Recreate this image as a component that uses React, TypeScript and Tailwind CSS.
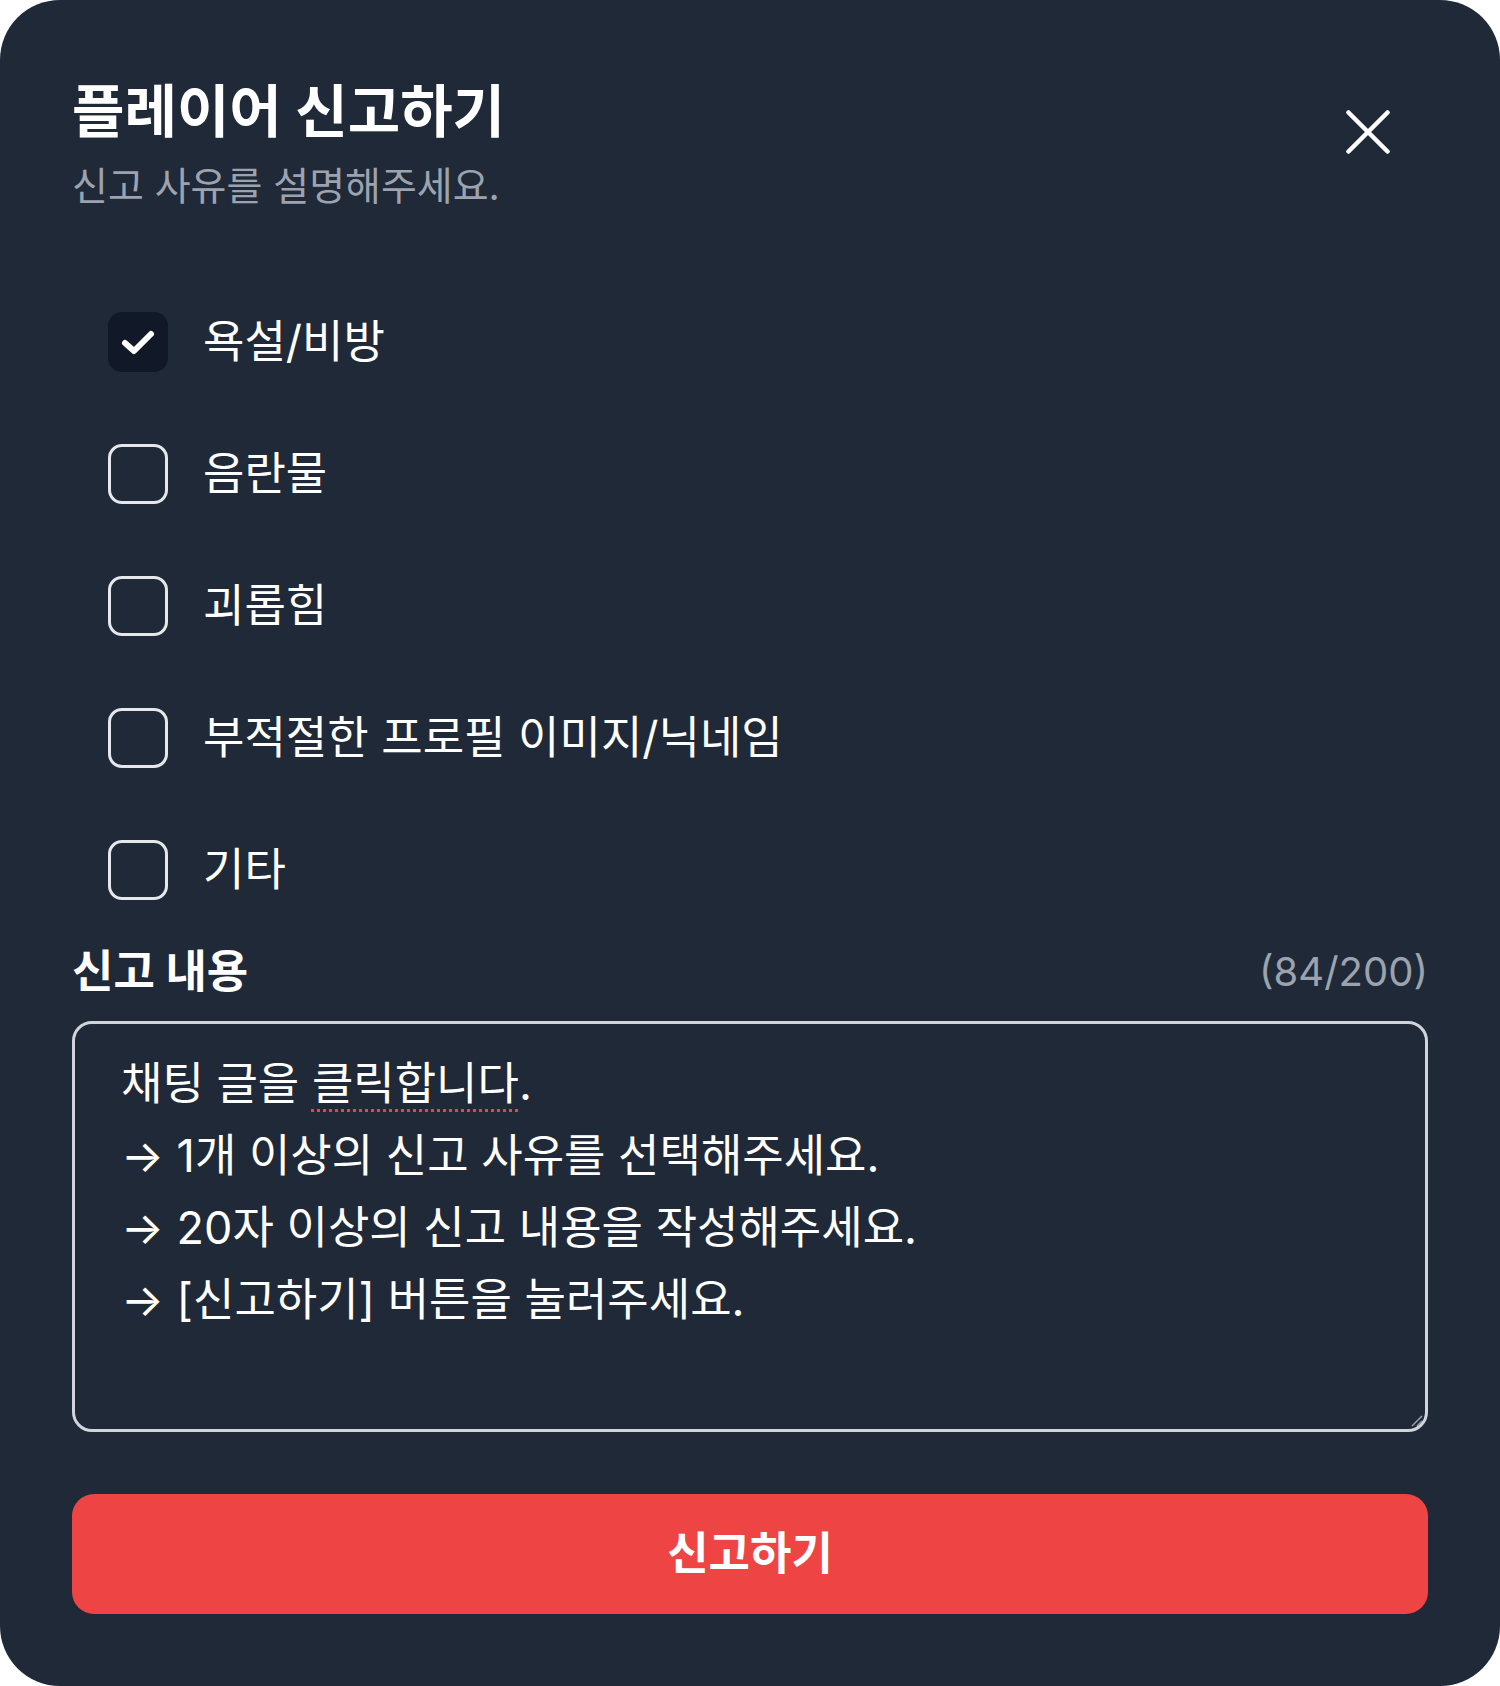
import React from "react";

const FONT = { fontFamily: '"Inter", "Noto Sans CJK KR", "Noto Sans", sans-serif' };

const reasons = [
  { label: "욕설/비방", checked: true },
  { label: "음란물", checked: false },
  { label: "괴롭힘", checked: false },
  { label: "부적절한 프로필 이미지/닉네임", checked: false },
  { label: "기타", checked: false },
];

function CheckBox({ checked }: { checked: boolean }) {
  if (checked) {
    return (
      <div className="flex h-[60px] w-[60px] shrink-0 items-center justify-center rounded-[14px] bg-[#111827]">
        <svg width="60" height="60" viewBox="0 0 60 60" fill="none">
          <polyline
            points="17,31 26,39 43,22"
            stroke="#ffffff"
            strokeWidth="6"
            strokeLinecap="round"
            strokeLinejoin="round"
          />
        </svg>
      </div>
    );
  }
  return <div className="h-[60px] w-[60px] shrink-0 rounded-[14px] border-[3px] border-[#e5e7eb]" />;
}

export default function App() {
  return (
    <div className="min-h-screen bg-white" style={FONT}>
      <div className="flex w-[1500px] flex-col rounded-[60px] bg-[#1f2937] px-[72px] pt-[72px] pb-[72px]">
        {/* Header */}
        <div className="flex items-start justify-between">
          <div className="flex flex-col">
            <h1 className="text-[57px] font-bold leading-[80px] text-white">플레이어 신고하기</h1>
            <p className="mt-[12px] text-[39px] leading-[44px] text-[#9ca3af]">신고 사유를 설명해주세요.</p>
          </div>
          <button className="mt-[20px] mr-[20px] flex h-[80px] w-[80px] items-center justify-center">
            <svg width="44" height="44" viewBox="0 0 44 44" fill="none">
              <line x1="2.5" y1="2.5" x2="41.5" y2="41.5" stroke="#ffffff" strokeWidth="4.5" strokeLinecap="round" />
              <line x1="41.5" y1="2.5" x2="2.5" y2="41.5" stroke="#ffffff" strokeWidth="4.5" strokeLinecap="round" />
            </svg>
          </button>
        </div>

        {/* Reasons */}
        <div className="mt-[104px] ml-[36px] flex flex-col gap-[72px]">
          {reasons.map((r) => (
            <div key={r.label} className="flex h-[60px] items-center gap-[35px]">
              <CheckBox checked={r.checked} />
              <span className="text-[45px] leading-[60px] text-white">{r.label}</span>
            </div>
          ))}
        </div>

        {/* Content label */}
        <div className="mt-[42px] flex h-[60px] items-center justify-between">
          <span className="text-[45px] font-bold leading-[60px] text-white">신고 내용</span>
          <span className="text-[40px] leading-[60px] text-[#9ca3af]" style={{ fontFamily: '"Inter", sans-serif' }}>
            (84/200)
          </span>
        </div>

        {/* Textarea-like box */}
        <div className="relative mt-[19px] h-[411px] rounded-[20px] border-[3px] border-[#d1d5db] pt-[24px] pl-[46px] pr-[46px]">
          <div className="text-[45px] leading-[72px] text-white">
            <div>
              채팅 글을{" "}
              <span className="underline decoration-[#ef4444] decoration-dotted decoration-[3px] underline-offset-[9px]">
                클릭합니다
              </span>
              .
            </div>
            <div>→ 1개 이상의 신고 사유를 선택해주세요.</div>
            <div>→ 20자 이상의 신고 내용을 작성해주세요.</div>
            <div>→ [신고하기] 버튼을 눌러주세요.</div>
          </div>
          <svg
            className="absolute right-[2px] bottom-[2px]"
            width="14"
            height="14"
            viewBox="0 0 14 14"
            fill="none"
          >
            <line x1="13" y1="3" x2="3" y2="13" stroke="#9ca3af" strokeWidth="1.5" />
            <line x1="13" y1="8" x2="8" y2="13" stroke="#9ca3af" strokeWidth="1.5" />
          </svg>
        </div>

        {/* Submit button */}
        <button className="mt-[62px] flex h-[120px] w-full items-center justify-center rounded-[22px] bg-[#ef4444]">
          <span className="text-[45px] font-bold text-white">신고하기</span>
        </button>
      </div>
    </div>
  );
}
